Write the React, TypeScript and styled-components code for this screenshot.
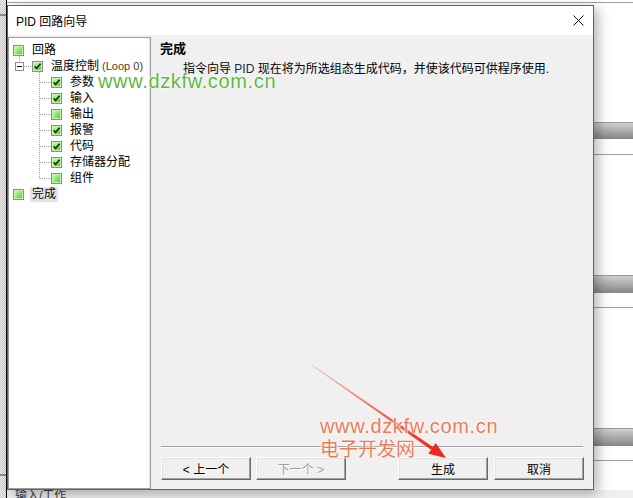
import React from "react";
import styled, { createGlobalStyle } from "styled-components";

const UI_FONT = `"Liberation Sans", "Noto Sans CJK SC", sans-serif`;

const GlobalStyle = createGlobalStyle`
  html, body { margin: 0; padding: 0; }
  body {
    width: 633px; height: 498px; overflow: hidden;
    background: #ffffff; color: #000;
    font-family: ${UI_FONT}; font-size: 12px;
  }
  #root { width: 633px; height: 498px; }
`;

/* ---------- background application ---------- */
const Desktop = styled.div`
  position: relative;
  width: 633px;
  height: 498px;
  overflow: hidden;
  display: flex;
`;

const LeftStrip = styled.div`
  flex: none;
  width: 6px;
  display: flex;
  flex-direction: column;
  background-color: #f4f4f4;
  background-image: repeating-conic-gradient(#c4c4c4 0 25%, #f6f6f6 0 50%);
  background-size: 2px 2px;
`;

const Tick = styled.div<{ $offset: number }>`
  margin-top: ${(p) => p.$offset}px;
  height: 2px;
  background: #8c8c8c;
`;

const AppEdge = styled.div`
  flex: none;
  width: 1px;
  background: #000;
`;

const AppArea = styled.div`
  flex: 1;
  display: flex;
  flex-direction: column;
  background: #ffffff;
`;

const Rule = styled.div<{ $offset: number }>`
  flex: none;
  margin-top: ${(p) => p.$offset}px;
  height: 1px;
  background: #a0a0a0;
`;

const SectionBar = styled.div<{ $offset: number; $h: number }>`
  flex: none;
  margin-top: ${(p) => p.$offset}px;
  height: ${(p) => p.$h}px;
  box-sizing: border-box;
  border-top: 1px solid #9a9a9a;
  background: linear-gradient(to bottom, #cfcfcf, #858585);
`;

const StatusArea = styled.div`
  flex: 1;
  margin-top: 29px;
  background: #efefef;
  padding-left: 8px;
  font-size: 12px;
  line-height: 13px;
  color: #3a3a3a;
`;

/* ---------- dialog ---------- */
const Dialog = styled.div`
  position: absolute;
  left: 7px;
  top: 5px;
  width: 587px;
  height: 485px;
  box-sizing: border-box;
  border: 1px solid #626262;
  background: #f0f0f0;
  box-shadow: 4px 4px 12px rgba(0, 0, 0, 0.3);
  display: flex;
  flex-direction: column;
`;

const TitleBar = styled.div`
  flex: none;
  height: 29px;
  background: #ffffff;
  display: flex;
  align-items: center;
  justify-content: space-between;
  padding: 0 9px 0 8px;
  font-size: 12px;
`;

const CloseGlyph = () => (
  <svg width="11" height="11" viewBox="0 0 11 11">
    <path d="M0.5 0.5 L10.5 10.5 M10.5 0.5 L0.5 10.5" stroke="#111" strokeWidth="1" />
  </svg>
);

const Client = styled.div`
  flex: 1;
  display: flex;
  padding-top: 2px;
  min-height: 0;
`;

const TreePanel = styled.div`
  flex: none;
  width: 143px;
  box-sizing: border-box;
  background: #ffffff;
  border: 1px solid #9c9c9c;
  box-shadow: inset -1px 0 #e6e6e6;
`;

const Rows = styled.div`
  position: relative;
  margin: 4px 0 0 1px;
`;

const Connectors = styled.svg`
  position: absolute;
  left: 0;
  top: 0;
  pointer-events: none;
`;

const Row = styled.div<{ $level: number }>`
  height: 16px;
  display: flex;
  align-items: flex-start;
  padding-left: ${(p) => 3 + p.$level * 19}px;
`;

const Box = styled.span`
  flex: none;
  width: 11px;
  height: 11px;
  margin-top: 3px;
  box-sizing: border-box;
  border: 1px solid #8c8c8c;
  background: linear-gradient(135deg, #dcfccd 0%, #8fe56f 50%, #4cc62c 100%);
  box-shadow: inset 0 0 0 1px #c6f5b2;
  display: flex;
  align-items: center;
  justify-content: center;
`;

const Label = styled.span<{ $selected?: boolean }>`
  margin-left: ${(p) => (p.$selected ? 6 : 8)}px;
  padding: 0 ${(p) => (p.$selected ? 2 : 0)}px;
  margin-top: ${(p) => (p.$selected ? 1 : 0)}px;
  line-height: ${(p) => (p.$selected ? 15 : 16)}px;
  background: ${(p) => (p.$selected ? "#e4e4e4" : "transparent")};
  white-space: nowrap;
  font-size: 12px;
`;

const LoopTag = styled.span`
  color: #5a3a18;
  font-size: 11px;
`;

const Pane = styled.div`
  flex: 1;
  display: flex;
  flex-direction: column;
  padding-top: 4px;
  min-width: 0;
`;

const PaneTitle = styled.div`
  padding-left: 9px;
  font-weight: bold;
  font-size: 13px;
  line-height: 16px;
`;

const PaneText = styled.div`
  margin-top: 4px;
  padding-left: 32px;
  font-size: 12px;
  line-height: 16px;
  white-space: nowrap;
`;

const Pid = styled.span`
  color: #1c2650;
`;

const Filler = styled.div`
  flex: 1;
`;

const Separator = styled.div`
  margin: 0 10px;
  border-top: 1px solid #a0a0a0;
  border-bottom: 1px solid #ffffff;
`;

const ButtonRow = styled.div`
  display: flex;
  justify-content: space-between;
  padding: 9px 9px 9px 10px;
`;

const ButtonGroup = styled.div<{ $gap: number }>`
  display: flex;
  gap: ${(p) => p.$gap}px;
`;

const Btn = styled.button`
  width: 90px;
  height: 23px;
  margin: 0;
  padding: 0;
  box-sizing: border-box;
  font: 12px ${UI_FONT};
  color: #000;
  background: #f0f0f0;
  border: 1px solid;
  border-color: #ffffff #696969 #696969 #ffffff;
  box-shadow: inset -1px -1px #a0a0a0, inset 1px 1px #e3e3e3;
  &:disabled {
    color: #a0a0a0;
    text-shadow: 1px 1px #ffffff;
  }
`;

/* ---------- overlays (watermarks, arrow) ---------- */
const Watermark = styled.div<{ $left: number; $top: number; $color: string; $size: number; $spacing: number }>`
  position: absolute;
  left: ${(p) => p.$left}px;
  top: ${(p) => p.$top}px;
  color: ${(p) => p.$color};
  font-family: "Liberation Sans", "Noto Sans CJK SC", sans-serif;
  font-size: ${(p) => p.$size}px;
  letter-spacing: ${(p) => p.$spacing}px;
  line-height: 20px;
  white-space: nowrap;
  text-shadow: 0 0 2px #fff, 0 0 2px #fff, 0 0 1px #fff;
`;

const ArrowLayer = styled.svg`
  position: absolute;
  left: 300px;
  top: 355px;
  pointer-events: none;
`;

const Arrow = () => {
  const sx = 11.7, sy = 10;
  const tx = 146, ty = 103;
  const dx = tx - sx, dy = ty - sy;
  const len = Math.hypot(dx, dy);
  const ux = dx / len, uy = dy / len;
  const nx = -uy, ny = ux;
  const headLen = 17, headHalf = 6.5;
  const bx = tx - ux * headLen, by = ty - uy * headLen;
  const p = (x: number, y: number) => `${x.toFixed(2)},${y.toFixed(2)}`;
  const shaft = [
    p(sx + nx * 0.3, sy + ny * 0.3),
    p(bx + nx * 1.7, by + ny * 1.7),
    p(bx - nx * 1.7, by - ny * 1.7),
    p(sx - nx * 0.3, sy - ny * 0.3),
  ].join(" ");
  const head = [
    p(tx, ty),
    p(bx + nx * headHalf, by + ny * headHalf),
    p(bx - nx * headHalf, by - ny * headHalf),
  ].join(" ");
  return (
    <ArrowLayer width="160" height="110" viewBox="0 0 160 110">
      <defs>
        <linearGradient id="shaftGrad" x1={sx} y1={sy} x2={bx} y2={by} gradientUnits="userSpaceOnUse">
          <stop offset="0" stopColor="#ff6a55" stopOpacity="0.5" />
          <stop offset="1" stopColor="#f0261a" />
        </linearGradient>
      </defs>
      <polygon points={shaft} fill="url(#shaftGrad)" />
      <polygon points={head} fill="#f0261a" />
    </ArrowLayer>
  );
};

/* ---------- data ---------- */
type Node = { level: number; label: string; checked: boolean; tag?: string; selected?: boolean };

const nodes: Node[] = [
  { level: 0, label: "回路", checked: false },
  { level: 1, label: "温度控制", checked: true, tag: "(Loop 0)" },
  { level: 2, label: "参数", checked: true },
  { level: 2, label: "输入", checked: true },
  { level: 2, label: "输出", checked: false },
  { level: 2, label: "报警", checked: true },
  { level: 2, label: "代码", checked: true },
  { level: 2, label: "存储器分配", checked: true },
  { level: 2, label: "组件", checked: false },
  { level: 0, label: "完成", checked: false, selected: true },
];

const CheckMark = () => (
  <svg width="9" height="9" viewBox="0 0 9 9">
    <path d="M1.6 4.2 L3.6 6.4 L7.6 1.8" fill="none" stroke="#0b300b" strokeWidth="1.6" />
  </svg>
);

const TreeLines = () => {
  const childRows = [2, 3, 4, 5, 6, 7, 8];
  return (
    <Connectors width="60" height="160" viewBox="0 0 60 160" shapeRendering="crispEdges">
      <g stroke="#a0a0a0" strokeWidth="1" strokeDasharray="1 1" fill="none">
        <path d="M9.5 14 V20" />
        <path d="M14 24.5 H22" />
        <path d="M29.5 30 V137" />
        {childRows.map((i) => (
          <path key={i} d={`M30 ${16 * i + 8.5} H41`} />
        ))}
      </g>
      <rect x="5.5" y="20.5" width="8" height="8" fill="#fff" stroke="#8f8f8f" />
      <path d="M7 24.5 H12" stroke="#000" />
    </Connectors>
  );
};

export default function App() {
  return (
    <>
      <GlobalStyle />
      <Desktop>
        <LeftStrip>
          <Tick $offset={14} />
          <Tick $offset={458} />
        </LeftStrip>
        <AppEdge />
        <AppArea>
          <Rule $offset={2} />
          <SectionBar $offset={119} $h={17} />
          <Rule $offset={15} />
          <SectionBar $offset={120} $h={18} />
          <Rule $offset={14} />
          <SectionBar $offset={120} $h={18} />
          <Rule $offset={14} />
          <StatusArea>输入/工作</StatusArea>
        </AppArea>

        <Dialog>
          <TitleBar>
            <span>PID 回路向导</span>
            <CloseGlyph />
          </TitleBar>
          <Client>
            <TreePanel>
              <Rows>
                <TreeLines />
                {nodes.map((n, i) => (
                  <Row key={i} $level={n.level}>
                    <Box>{n.checked && <CheckMark />}</Box>
                    <Label $selected={n.selected}>
                      {n.label}
                      {n.tag && <LoopTag> {n.tag}</LoopTag>}
                    </Label>
                  </Row>
                ))}
              </Rows>
            </TreePanel>
            <Pane>
              <PaneTitle>完成</PaneTitle>
              <PaneText>
                指令向导 <Pid>PID</Pid> 现在将为所选组态生成代码，并使该代码可供程序使用.
              </PaneText>
              <Filler />
              <Separator />
              <ButtonRow>
                <ButtonGroup $gap={5}>
                  <Btn>&lt; 上一个</Btn>
                  <Btn disabled>下一个 &gt;</Btn>
                </ButtonGroup>
                <ButtonGroup $gap={6}>
                  <Btn>生成</Btn>
                  <Btn>取消</Btn>
                </ButtonGroup>
              </ButtonRow>
            </Pane>
          </Client>
        </Dialog>

        <Watermark $left={98} $top={71} $color="#62b842" $size={20} $spacing={0.65}>
          www.dzkfw.com.cn
        </Watermark>
        <Arrow />
        <Watermark $left={320} $top={416} $color="#ee7a55" $size={20} $spacing={0.65}>
          www.dzkfw.com.cn
        </Watermark>
        <Watermark $left={320} $top={440} $color="#ee7a55" $size={19} $spacing={0}>
          电子开发网
        </Watermark>
      </Desktop>
    </>
  );
}
